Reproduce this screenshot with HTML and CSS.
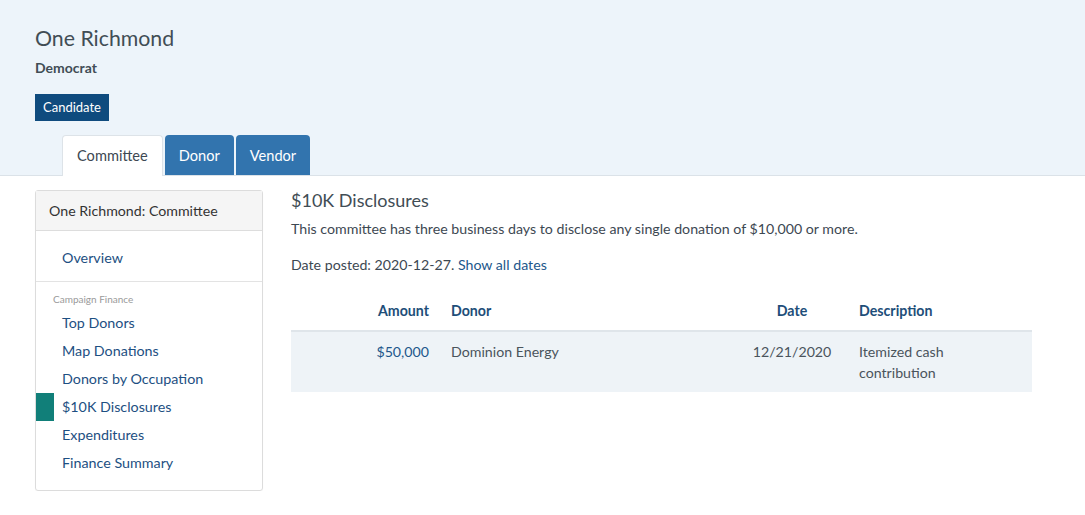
FILE: index.html
```html
<!DOCTYPE html>
<html lang="en">
<head>
<meta charset="utf-8">
<title>One Richmond</title>
<link rel="stylesheet" href="styles.css">
</head>
<body>
<header class="masthead">
  <h1 class="title">One Richmond</h1>
  <div class="party">Democrat</div>
  <a class="badge" href="#">Candidate</a>
  <nav class="tabs">
    <a class="tab tab-active" href="#">Committee</a>
    <a class="tab" href="#">Donor</a>
    <a class="tab" href="#">Vendor</a>
  </nav>
</header>
<div class="page">
  <aside class="panel">
    <div class="panel-head">One Richmond: Committee</div>
    <ul class="nav-group first">
      <li><a class="nav-link" href="#">Overview</a></li>
    </ul>
    <div class="nav-group second">
      <div class="nav-label">Campaign Finance</div>
      <ul class="nav-list">
        <li><a class="nav-link" href="#">Top Donors</a></li>
        <li><a class="nav-link" href="#">Map Donations</a></li>
        <li><a class="nav-link" href="#">Donors by Occupation</a></li>
        <li><a class="nav-link active" href="#">$10K Disclosures</a></li>
        <li><a class="nav-link" href="#">Expenditures</a></li>
        <li><a class="nav-link" href="#">Finance Summary</a></li>
      </ul>
    </div>
  </aside>
  <main class="content">
    <h2 class="heading">$10K Disclosures</h2>
    <p class="lead">This committee has three business days to disclose any single donation of $10,000 or more.</p>
    <p class="posted">Date posted: 2020-12-27. <a href="#" class="link">Show all dates</a></p>
    <table class="grid">
      <colgroup>
        <col class="c-amount">
        <col class="c-donor">
        <col class="c-date">
        <col class="c-desc">
      </colgroup>
      <thead>
        <tr>
          <th class="right">Amount</th>
          <th>Donor</th>
          <th class="center">Date</th>
          <th>Description</th>
        </tr>
      </thead>
      <tbody>
        <tr>
          <td class="right"><a href="#" class="link">$50,000</a></td>
          <td>Dominion Energy</td>
          <td class="center">12/21/2020</td>
          <td>Itemized cash contribution</td>
        </tr>
      </tbody>
    </table>
  </main>
</div>
</body>
</html>
```
FILE: styles.css
```css
* { box-sizing: border-box; }
body {
  margin: 0;
  font-family: Lato, "Open Sans", sans-serif;
  color: #3d4852;
  background: #fff;
}
a { text-decoration: none; }

.masthead {
  background: #edf4fa;
  border-bottom: 1px solid #dbe2e8;
  padding: 25px 35px 0;
}
.title {
  margin: 0;
  font-size: 21.3px;
  line-height: 26px;
  font-weight: 400;
  color: #414d55;
}
.party {
  margin-top: 7px;
  font-size: 14px;
  line-height: 20px;
  font-weight: 700;
  color: #414d55;
}
.badge {
  display: inline-block;
  margin-top: 16px;
  height: 27px;
  line-height: 27px;
  padding: 0 8px;
  font-size: 13px;
  color: #fff;
  background: #0f4b7e;
}
.tabs {
  display: flex;
  gap: 2px;
  margin-top: 14px;
  margin-left: 27px;
}
.tab {
  height: 40px;
  line-height: 41px;
  padding: 0 14px;
  font-size: 14.6px;
  color: #fff;
  background: #3274ae;
  border-radius: 4px 4px 0 0;
}
.tab-active {
  background: #fff;
  color: #3d4852;
  border: 1px solid #dde3e8;
  border-bottom: none;
  line-height: 40px;
  margin-bottom: -1px;
  height: 41px;
}

.page {
  display: flex;
  gap: 28px;
  padding: 14px 35px 0;
  align-items: flex-start;
}
.panel {
  width: 228px;
  flex: none;
  border: 1px solid #dcdcdc;
  border-radius: 3px;
  box-shadow: 0 1px 1px rgba(0,0,0,0.04);
}
.panel-head {
  height: 40px;
  line-height: 39px;
  padding: 0 13px;
  background: #f5f5f5;
  border-bottom: 1px solid #dddddd;
  font-size: 14.2px;
  color: #333;
}
.nav-group { margin: 0; padding: 0; list-style: none; }
.nav-list { margin: 0; padding: 0; list-style: none; }
.first {
  padding: 13px 0 9px;
  border-bottom: 1px solid #e3e3e3;
}
.second { padding: 10px 0 13px; }
.nav-label {
  padding-left: 17px;
  font-size: 10px;
  line-height: 14px;
  margin-bottom: 3px;
  color: #9a9a9a;
}
.nav-link {
  display: block;
  height: 28px;
  line-height: 27px;
  padding-left: 26px;
  font-size: 14.3px;
  color: #1d4f82;
}
.nav-list li:nth-child(n+5) .nav-link { height: 27.8px; }
.nav-link.active {
  border-left: 18px solid #117f79;
  padding-left: 8px;
}

.content { flex: 1; min-width: 0; }
.heading {
  margin: 0;
  font-size: 18px;
  line-height: 20px;
  font-weight: 400;
  color: #414d55;
}
.lead, .posted {
  margin: 8px 0 0;
  font-size: 14.2px;
  line-height: 21px;
}
.posted { margin-top: 15px; }
.link { color: #22578b; }

.grid {
  margin-top: 16px;
  width: 741px;
  border-collapse: collapse;
  table-layout: fixed;
  font-size: 14.2px;
  line-height: 21px;
}
.c-amount { width: 149px; }
.c-donor { width: 296px; }
.c-date { width: 112px; }
.c-desc { width: 184px; }
.grid th {
  text-align: left;
  font-weight: 700;
  color: #1e4e79;
  padding: 9px 11px 9px;
  border-bottom: 2px solid #dfe5ea;
}
.grid td {
  padding: 9px 11px;
  vertical-align: top;
  background: #eef3f7;
  color: #4a545c;
}
.grid .right { text-align: right; }
.grid .center { text-align: center; }
```
